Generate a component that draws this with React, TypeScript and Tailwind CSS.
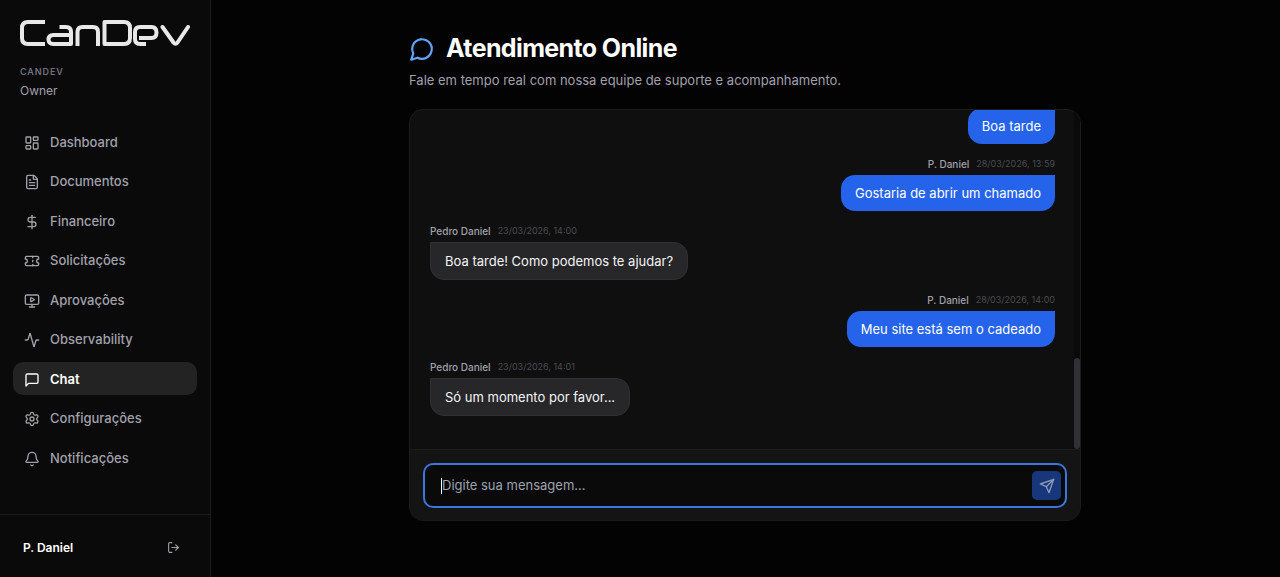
import type { ComponentType, ReactNode } from 'react';
import {
  Activity,
  Bell,
  FileText,
  DollarSign,
  LayoutDashboard,
  LogOut,
  MonitorPlay,
  Settings,
  Ticket,
} from 'lucide-react';

type IconProps = { className?: string };

function StrokeIcon({ className, children }: IconProps & { children: ReactNode }) {
  return (
    <svg
      viewBox="0 0 24 24"
      className={className}
      fill="none"
      stroke="currentColor"
      strokeWidth="2"
      strokeLinecap="round"
      strokeLinejoin="round"
      aria-hidden="true"
    >
      {children}
    </svg>
  );
}

function ChatSquare({ className }: IconProps) {
  return (
    <StrokeIcon className={className}>
      <path d="M21 15a2 2 0 0 1-2 2H7l-4 4V5a2 2 0 0 1 2-2h14a2 2 0 0 1 2 2z" />
    </StrokeIcon>
  );
}

function ChatCircle({ className }: IconProps) {
  return (
    <StrokeIcon className={className}>
      <path d="M7.9 20A9 9 0 1 0 4 16.1L2 22Z" />
    </StrokeIcon>
  );
}

function PaperPlane({ className }: IconProps) {
  return (
    <StrokeIcon className={className}>
      <path d="m22 2-7 20-4-9-9-4Z" />
      <path d="M22 2 11 13" />
    </StrokeIcon>
  );
}

type NavEntry = {
  label: string;
  icon: ComponentType<IconProps>;
  active?: boolean;
};

const NAV: NavEntry[] = [
  { label: 'Dashboard', icon: LayoutDashboard },
  { label: 'Documentos', icon: FileText },
  { label: 'Financeiro', icon: DollarSign },
  { label: 'Solicitações', icon: Ticket },
  { label: 'Aprovações', icon: MonitorPlay },
  { label: 'Observability', icon: Activity },
  { label: 'Chat', icon: ChatSquare, active: true },
  { label: 'Configurações', icon: Settings },
  { label: 'Notificações', icon: Bell },
];

type Message = { author?: string; time?: string; text: string; mine: boolean };

const MESSAGES: Message[] = [
  { text: 'Boa tarde', mine: true },
  { author: 'P. Daniel', time: '28/03/2026, 13:59', text: 'Gostaria de abrir um chamado', mine: true },
  { author: 'Pedro Daniel', time: '23/03/2026, 14:00', text: 'Boa tarde! Como podemos te ajudar?', mine: false },
  { author: 'P. Daniel', time: '28/03/2026, 14:00', text: 'Meu site está sem o cadeado', mine: true },
  { author: 'Pedro Daniel', time: '23/03/2026, 14:01', text: 'Só um momento por favor...', mine: false },
];

function Logo() {
  return (
    <svg
      viewBox="0 0 170 28"
      className="h-7 w-[170px]"
      fill="none"
      stroke="#e8e8e8"
      strokeWidth="4"
      strokeLinejoin="round"
      role="img"
      aria-label="CanDev"
    >
      <path d="M25 2H8Q2 2 2 8V18Q2 24 8 24H25" />
      <path d="M39.500 7H46Q51 7 51 12V24H33.500Q28.500 24 28.500 19.500T33.500 15H51" />
      <path d="M57.500 26V12Q57.500 7 62.500 7H73Q78 7 78 12V26" />
      <path d="M84.500 2H104Q110 2 110 8V18Q110 24 104 24H84.500Z" />
      <path d="M126 24H120Q115 24 115 19V12Q115 7 120 7H131.500Q136.500 7 136.500 12.500T131.500 18H119" />
      <path d="M142.500 7L153.500 22.500Q155.500 25 157.500 22.500L168 7" strokeLinecap="round" />
    </svg>
  );
}

function NavItem({ label, icon: Icon, active }: NavEntry) {
  return (
    <li>
      <a
        href="#"
        aria-current={active ? 'page' : undefined}
        className={
          active
            ? 'flex h-[33px] items-center gap-2.5 rounded-[10px] bg-[#232323] px-[11px] pt-0.5 text-[13px] font-semibold text-white'
            : 'flex h-[33px] items-center gap-2.5 rounded-[10px] px-[11px] pt-0.5 text-[13px] font-medium text-[#a1a1aa]'
        }
      >
        <Icon className="size-4" />
        {label}
      </a>
    </li>
  );
}

function Sidebar() {
  return (
    <aside className="flex w-[211px] shrink-0 flex-col border-r border-[#1c1c1c] bg-[#0a0a0a]">
      <div className="px-5 pt-5">
        <Logo />
        <p className="mt-4 text-[9px] leading-4 font-semibold tracking-widest text-[#71717a]">CANDEV</p>
        <p className="mt-[3px] text-xs leading-4 text-[#a1a1aa]">Owner</p>
      </div>
      <nav className="mt-[26px] flex-1 px-[13px]">
        <ul className="flex h-[349px] flex-col justify-between">
          {NAV.map((item) => (
            <NavItem key={item.label} {...item} />
          ))}
        </ul>
      </nav>
      <div className="flex h-[63px] items-center justify-between border-t border-[#1c1c1c] pt-1 pr-[30px] pb-px pl-[23px]">
        <span className="text-xs font-semibold text-white">P. Daniel</span>
        <button type="button" aria-label="Sair" className="text-[#a1a1aa]">
          <LogOut className="size-[13px]" />
        </button>
      </div>
    </aside>
  );
}

function Bubble({ mine, children }: { mine: boolean; children: ReactNode }) {
  return (
    <p
      className={
        mine
          ? 'rounded-[14px] rounded-tr-none bg-[#2563eb] px-3.5 py-2 text-[13px] leading-5 text-white'
          : 'rounded-[14px] rounded-tl-none border border-[#303033] bg-[#27272a] px-3.5 py-2 text-[13px] leading-5 text-[#f4f4f5]'
      }
    >
      {children}
    </p>
  );
}

function ChatMessage({ author, time, text, mine }: Message) {
  return (
    <li className={mine ? 'flex flex-col items-end' : 'flex flex-col items-start'}>
      {author && (
        <div className="mb-1 flex items-center gap-[7px] leading-[14px]">
          <span className="text-[10px] font-medium text-[#a1a1aa]">{author}</span>
          <time className="text-[9px] text-[#4b4b51]">{time}</time>
        </div>
      )}
      <Bubble mine={mine}>{text}</Bubble>
    </li>
  );
}

export default function App() {
  return (
    <div className="flex min-h-screen bg-[#030303] font-['Inter',sans-serif] text-white">
      <Sidebar />
      <main className="flex flex-1 justify-center pt-8 pr-[25px] pl-6">
        <div className="w-full max-w-[672px]">
          <h1 className="flex h-[34px] items-center gap-[11px] text-[25px] font-bold tracking-tight">
            <ChatCircle className="size-[26px] text-[#60a5fa]" />
            Atendimento Online
          </h1>
          <p className="mt-1 text-[13px] leading-5 text-[#a1a1aa]">
            Fale em tempo real com nossa equipe de suporte e acompanhamento.
          </p>

          <section className="mt-[19px] overflow-hidden rounded-[14px] border border-[#1c1c1c] bg-[#0f0f0f]">
            <div className="flex h-[339px]">
              <div className="flex flex-1 flex-col justify-end overflow-hidden pr-[19px] pb-[33px] pl-5">
                <ul className="flex flex-col gap-[13px]">
                  {MESSAGES.map((message) => (
                    <ChatMessage key={message.text} {...message} />
                  ))}
                </ul>
              </div>
              <div className="flex w-1.5 flex-col justify-end bg-[#0a0a0a]">
                <div className="h-[91px] rounded-full bg-[#303036]" />
              </div>
            </div>
            <form className="border-t border-[#1c1c1c] bg-[#141414] px-[13px] pt-[13px] pb-3">
              <div className="flex h-[45px] items-center rounded-[10px] border-2 border-[#3b76dc] bg-[#0a0a0a] pr-1 pl-4">
                <span className="h-4 w-px bg-white" />
                <input
                  type="text"
                  aria-label="Mensagem"
                  placeholder="Digite sua mensagem..."
                  className="min-w-0 flex-1 bg-transparent text-[13px] text-white outline-none placeholder:text-[#9ca3af]"
                />
                <button
                  type="button"
                  aria-label="Enviar"
                  className="flex size-[29px] items-center justify-center rounded-[5px] bg-[#18367a] text-[#8e9ab5]"
                >
                  <PaperPlane className="size-4" />
                </button>
              </div>
            </form>
          </section>
        </div>
      </main>
    </div>
  );
}
